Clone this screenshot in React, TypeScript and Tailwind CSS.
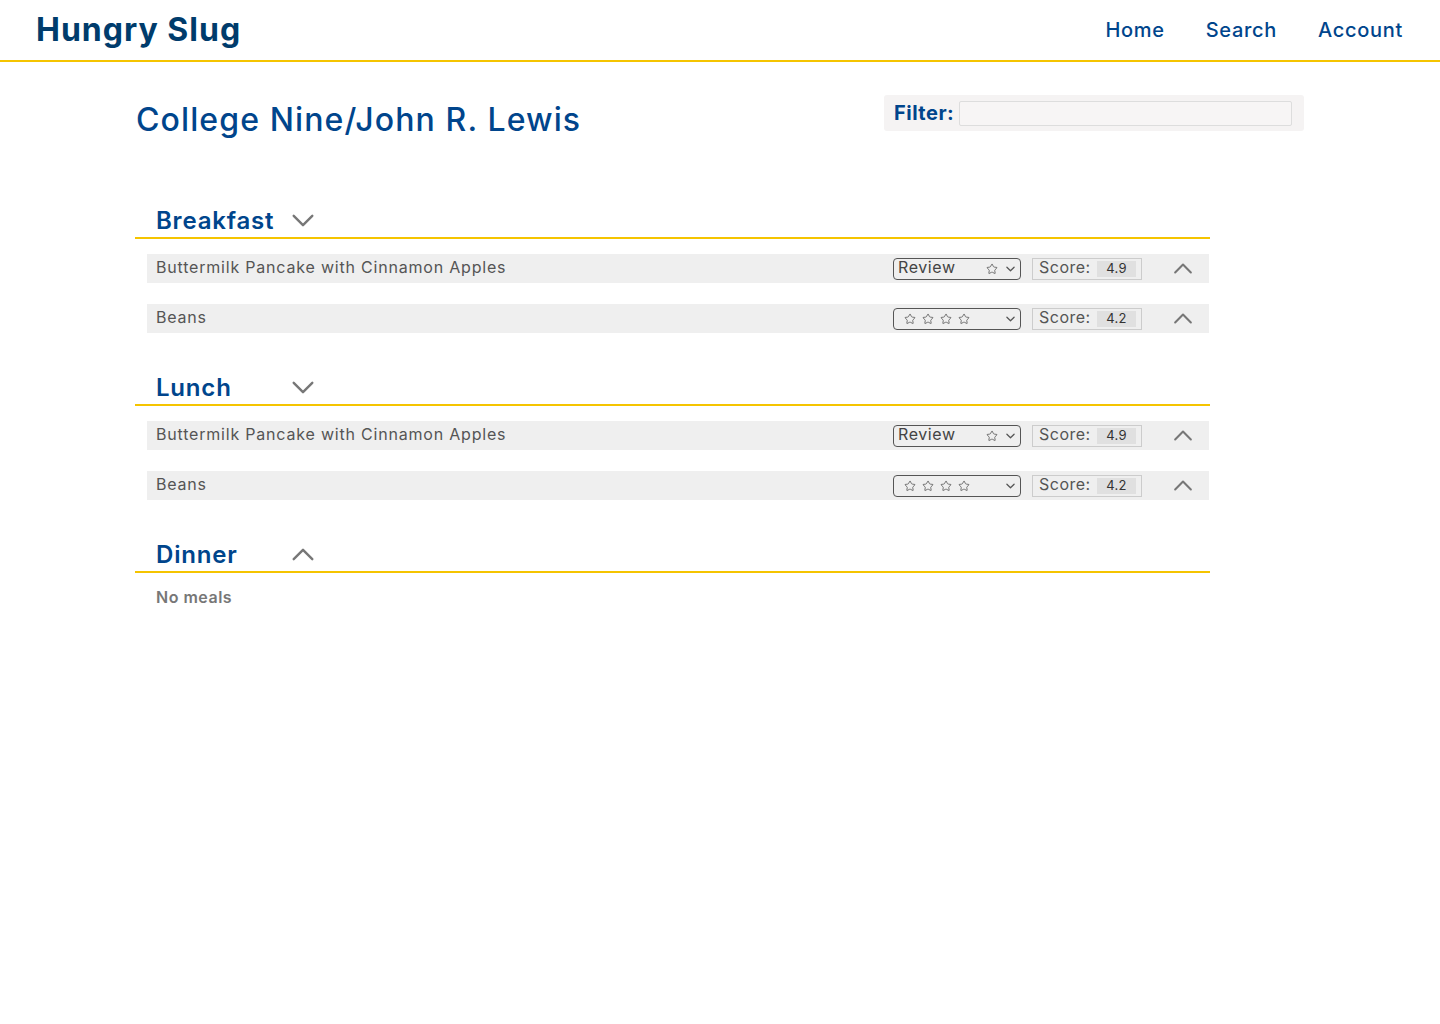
import { Star } from "lucide-react";

const font = { fontFamily: "Inter, 'Noto Sans', sans-serif" };

function ChevronDown({ className }: { className?: string }) {
  return (
    <svg viewBox="0 0 24 14" className={className} fill="none" stroke="currentColor" strokeWidth="2.6" strokeLinecap="round" strokeLinejoin="round">
      <path d="M2 2l10 10 10-10" />
    </svg>
  );
}

function ChevronUp({ className }: { className?: string }) {
  return (
    <svg viewBox="0 0 24 14" className={className} fill="none" stroke="currentColor" strokeWidth="2.6" strokeLinecap="round" strokeLinejoin="round">
      <path d="M2 12L12 2l10 10" />
    </svg>
  );
}

function SmallChevron() {
  return (
    <svg viewBox="0 0 10 6" className="w-[9px] h-[6px] text-[#555]" fill="none" stroke="currentColor" strokeWidth="1.4" strokeLinecap="round" strokeLinejoin="round">
      <path d="M1 1l4 4 4-4" />
    </svg>
  );
}

function Stars({ count }: { count: number }) {
  return (
    <div className="flex gap-[6px]">
      {Array.from({ length: count }).map((_, i) => (
        <Star key={i} size={12} strokeWidth={1.6} className="text-[#555]" />
      ))}
    </div>
  );
}

type Meal = { name: string; review: boolean; score: string };

const meals: Meal[] = [
  { name: "Buttermilk Pancake with Cinnamon Apples", review: true, score: "4.9" },
  { name: "Beans", review: false, score: "4.2" },
];

function MealRow({ meal }: { meal: Meal }) {
  return (
    <div className="ml-[12px] w-[1062px] h-[29px] bg-[#efefef] flex items-center pl-[9px] pr-[16px]">
      <span className="flex-1 text-[16px] leading-none pb-[4px] tracking-[0.8px] text-[#555]">{meal.name}</span>
      <div className="w-[128px] h-[22px] border border-[#555] rounded-[4px] flex items-center pl-[4px] pr-[5px]">
        {meal.review ? (
          <>
            <span className="text-[16px] tracking-[0.6px] text-[#444] flex-1 leading-none pb-[3px]">Review</span>
            <Stars count={1} />
            <span className="ml-[8px]"><SmallChevron /></span>
          </>
        ) : (
          <>
            <div className="flex-1 pl-[6px]"><Stars count={4} /></div>
            <SmallChevron />
          </>
        )}
      </div>
      <div className="ml-[11px] w-[110px] h-[22px] border border-[#ccc] flex items-center pl-[6px] pr-[5px]">
        <span className="text-[16px] tracking-[0.5px] text-[#555] flex-1 leading-none pb-[3px]">Score:</span>
        <span className="w-[39px] h-[16px] bg-[#e0e0e0] text-[13px] tracking-[0.3px] text-[#333] flex items-center justify-center leading-none pb-[1px]">{meal.score}</span>
      </div>
      <ChevronUp className="ml-[31px] w-[20px] h-[11px] text-[#777]" />
    </div>
  );
}

function Section({ title, open, items }: { title: string; open: boolean; items: Meal[] }) {
  return (
    <section className="mt-[29px] first:mt-0">
      <div className="w-[1075px] border-b-2 border-[#f5c400] flex items-end h-[44px] pb-[4px] pl-[21px]">
        <h2 className="w-[135px] text-[24px] font-semibold tracking-[0.8px] text-[#00458c] leading-none">{title}</h2>
        {open ? <ChevronDown className="w-[24px] h-[13px] text-[#777] mb-[6px]" /> : <ChevronUp className="w-[24px] h-[13px] text-[#777] mb-[6px]" />}
      </div>
      {items.length > 0 ? (
        <div className="mt-[15px] flex flex-col gap-[21px]">
          {items.map((m, i) => (
            <MealRow key={i} meal={m} />
          ))}
        </div>
      ) : (
        <p className="mt-[12px] pl-[21px] text-[16px] tracking-[0.5px] font-semibold text-[#777]">No meals</p>
      )}
    </section>
  );
}

export default function App() {
  return (
    <div className="min-h-[1024px] bg-white" style={font}>
      <header className="h-[62px] border-b-2 border-[#f5c400] flex items-center justify-between pl-[36px] pr-[37px]">
        <h1 className="text-[32px] font-bold text-[#003c6c] tracking-[1px]">Hungry Slug</h1>
        <nav className="flex gap-[41px] text-[20px] font-medium tracking-[0.7px] text-[#00458c]">
          <a>Home</a>
          <a>Search</a>
          <a>Account</a>
        </nav>
      </header>

      <main className="pl-[135px] pr-[136px]">
        <div className="flex justify-between items-start pt-[33px]">
          <h1 className="pl-[1px] mt-[1px] text-[32px] font-medium tracking-[1.1px] text-[#00458c]">College Nine/John R. Lewis</h1>
          <div className="w-[420px] h-[36px] bg-[#f5f3f3] rounded-[3px] flex items-center pl-[10px] pr-[12px] gap-[5px]">
            <label className="text-[20px] font-bold tracking-[0.5px] text-[#00458c]">Filter:</label>
            <input className="flex-1 h-[25px] bg-[#f7f5f5] border border-[#ddd] rounded-[2px]" />
          </div>
        </div>

        <div className="mt-[51px]">
          <Section title="Breakfast" open items={meals} />
          <Section title="Lunch" open items={meals} />
          <Section title="Dinner" open={false} items={[]} />
        </div>
      </main>
    </div>
  );
}
